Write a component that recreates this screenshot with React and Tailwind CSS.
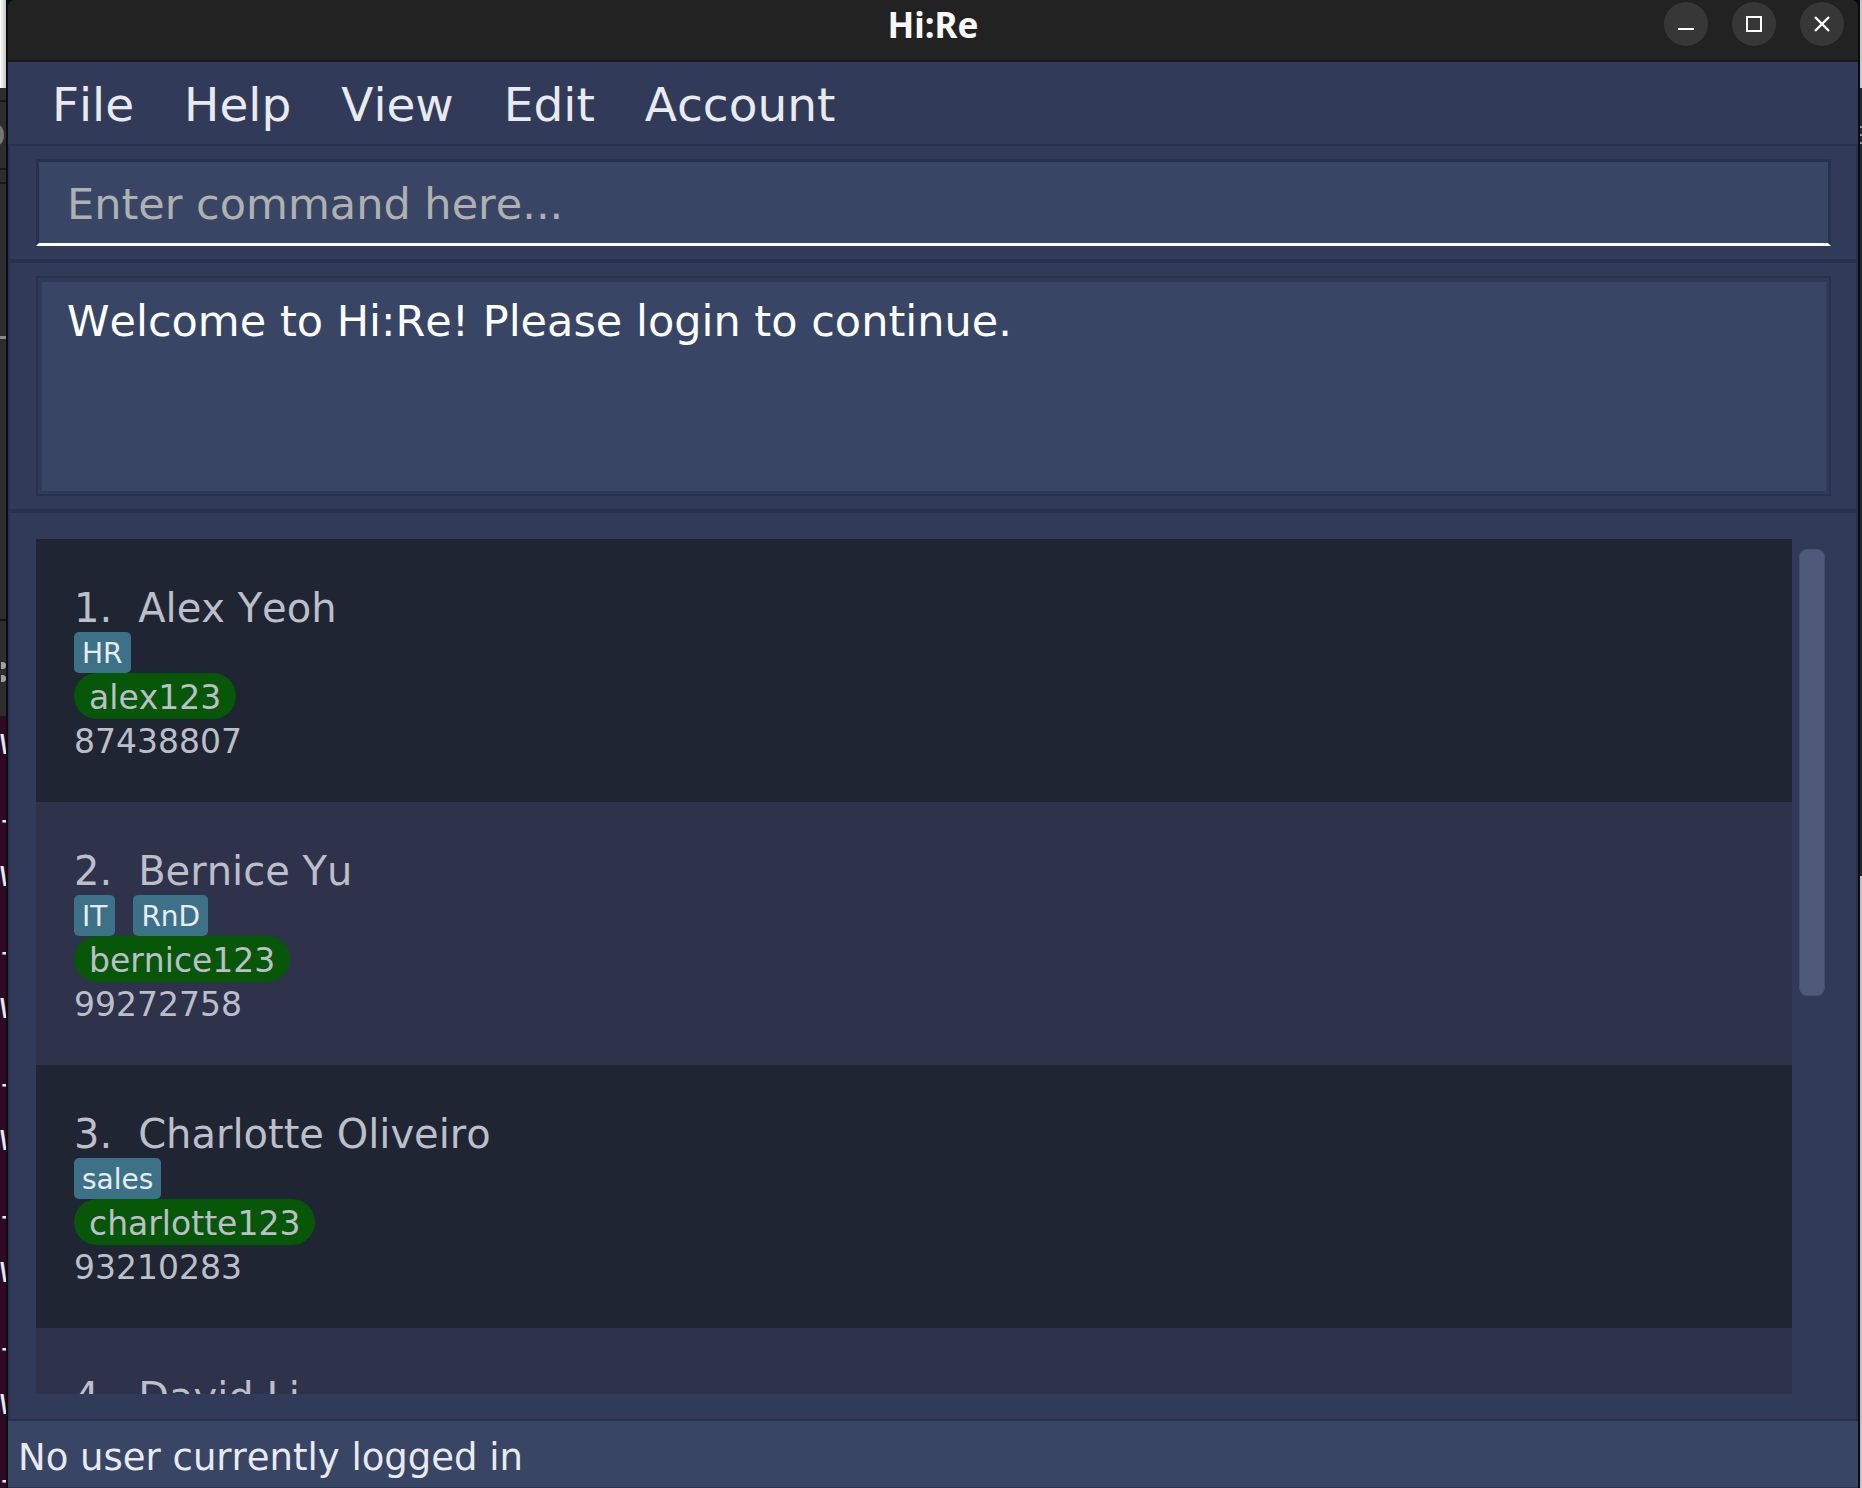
const MENUS = ["File", "Help", "View", "Edit", "Account"];

const PEOPLE = [
  { name: "Alex Yeoh", tags: ["HR"], user: "alex123", phone: "87438807" },
  { name: "Bernice Yu", tags: ["IT", "RnD"], user: "bernice123", phone: "99272758" },
  { name: "Charlotte Oliveiro", tags: ["sales"], user: "charlotte123", phone: "93210283" },
  { name: "David Li" },
];

const TERMINAL_LINES = ["w", "f", "w", "f", "w", "f", "w", "f", "w", "f", "w", "f"];

function WindowButton({ label, children }) {
  return (
    <button
      type="button"
      aria-label={label}
      className="flex h-11 w-11 items-center justify-center rounded-full bg-[#373737]"
    >
      <svg viewBox="0 0 16 16" className="h-4 w-4" fill="none" stroke="#ffffff" strokeWidth="2">
        {children}
      </svg>
    </button>
  );
}

function TitleBar() {
  return (
    <header className="grid h-[62px] shrink-0 grid-cols-[1fr_auto_1fr] border-b-2 border-[#18181b] bg-[#222222] px-[14px]">
      <span />
      <h1 className="pt-[1px] font-['Noto_Sans'] text-[35px] leading-[48px] font-bold text-[#f8f8f8]">Hi:Re</h1>
      <div className="flex gap-6 justify-self-end pt-[2px]">
        <WindowButton label="Minimize">
          <path d="M0 13h16" />
        </WindowButton>
        <WindowButton label="Maximize">
          <path d="M1 1h14v14H1z" />
        </WindowButton>
        <WindowButton label="Close">
          <path d="M1 1l14 14M15 1L1 15" strokeWidth="2.4" />
        </WindowButton>
      </div>
    </header>
  );
}

function PersonRow({ index, person }) {
  return (
    <li className="h-[263px] shrink-0 pt-[46px] pl-[38px] text-[#bcbec8] odd:bg-[#202534] even:bg-[#2e324b]">
      <h2 className="flex gap-[26px] text-[40px] leading-[47px]">
        <span>{index}.</span>
        <span>{person.name}</span>
      </h2>
      {person.tags && (
        <>
          <div className="flex gap-[18px]">
            {person.tags.map((tag) => (
              <span
                key={tag}
                className="h-[41px] rounded-[5px] bg-[#3d7187] px-2 text-[28px] leading-[43px] text-[#e6edf0]"
              >
                {tag}
              </span>
            ))}
          </div>
          <p className="h-[46px] w-fit rounded-full bg-[#065808] px-[15px] text-[33px] leading-[50px]">
            {person.user}
          </p>
          <p className="text-[33px] leading-[45px]">{person.phone}</p>
        </>
      )}
    </li>
  );
}

export default function App() {
  return (
    <div className="flex h-screen overflow-hidden bg-[#0a0c10] font-['DejaVu_Sans',sans-serif] [font-kerning:none]">
      <div aria-hidden="true" className="flex w-[6px] shrink-0 flex-col overflow-hidden">
        <div className="h-[88px] shrink-0 bg-linear-to-r from-white to-[#c4c4c4]" />
        <div className="flex h-[628px] shrink-0 flex-col bg-[#2d2d2d]">
          <div className="mt-3 h-[2px] shrink-0 bg-[#181818]" />
          <div className="mt-[18px] flex h-[40px] shrink-0 justify-end text-[40px] leading-[24px] text-[#777777]">o</div>
          <div className="mt-[8px] h-[2px] shrink-0 bg-[#181818]" />
          <div className="mt-[12px] h-[2px] shrink-0 bg-[#181818]" />
          <div className="mt-[152px] h-[3px] shrink-0 bg-[#888888]" />
          <div className="mt-[280px] h-[2px] shrink-0 bg-[#111111]" />
          <div className="flex h-[94px] shrink-0 flex-col items-end justify-center gap-[6px] overflow-hidden pt-2">
            <span className="h-[7px] w-[5px] rounded-r-full bg-[#a0a0a0]" />
            <span className="h-[7px] w-[5px] rounded-r-full bg-[#a0a0a0]" />
          </div>
        </div>
        <div className="flex flex-1 flex-col overflow-hidden bg-[#300a24] text-[#e8e8e8]">
          {TERMINAL_LINES.map((c, i) => (
            <div
              key={i}
              className="h-[66px] shrink-0 font-['Liberation_Mono',monospace] text-[36px] leading-[50px] odd:pt-1 even:pt-6"
            >
              {c}
            </div>
          ))}
        </div>
      </div>

      <main className="ml-[2px] flex min-w-0 flex-1 flex-col overflow-hidden rounded-t-lg bg-[#313b59]">
        <TitleBar />
        <nav className="flex h-[82px] shrink-0 gap-[50px] pl-11 text-[47px] leading-[85px] text-[#e9eaee]">
          {MENUS.map((m) => (
            <button key={m} type="button">
              {m}
            </button>
          ))}
        </nav>

        <section className="shrink-0 border-2 border-[#28314e] py-[13px] pr-[25px] pl-[26px]">
          <input
            type="text"
            aria-label="Command"
            placeholder="Enter command here..."
            className="block h-[87px] w-full border-3 border-[#28314e] border-b-white bg-[#394565] px-[28px] pt-[2px] text-[43px] text-white placeholder-[#b0b0b0] outline-none"
          />
        </section>

        <section className="shrink-0 border-2 border-[#28314e] py-[13px] pr-[25px] pl-[26px]">
          <div className="h-[220px] border-2 border-[#28314e] bg-[#303a58] p-[3px] pt-1 pl-1">
            <p className="h-full bg-[#394565] px-[25px] pt-[13px] text-[43px] leading-[52px] text-white">
              Welcome to Hi:Re! Please login to continue.
            </p>
          </div>
        </section>

        <section className="flex min-h-0 flex-1 gap-[7px] border-2 border-[#28314e] pt-[26px] pr-[31px] pb-[25px] pl-[26px]">
          <ol className="flex min-w-0 flex-1 flex-col overflow-hidden">
            {PEOPLE.map((p, i) => (
              <PersonRow key={p.name} index={i + 1} person={p} />
            ))}
          </ol>
          <div className="w-[26px] shrink-0 py-[10px]">
            <div className="h-[447px] rounded-lg border border-[#465070] bg-[#4f5a7b]" />
          </div>
        </section>

        <footer className="h-[67px] shrink-0 border-b border-[#28314e] bg-[#394565] pl-[10px] text-[37px] leading-[74px] text-[#e9eaee]">
          No user currently logged in
        </footer>
      </main>

      <div aria-hidden="true" className="ml-[2px] flex w-[2px] shrink-0 flex-col">
        <div className="h-[88px] bg-[#c8c8c8]" />
        <div className="flex h-[788px] flex-col gap-[6px] bg-[#2b2a28] pt-[38px]">
          <span className="h-[2px] bg-[#999999]" />
          <span className="h-[2px] bg-[#999999]" />
          <span className="h-[2px] bg-[#999999]" />
        </div>
        <div className="flex-1 bg-[#c4c0bc]" />
      </div>
    </div>
  );
}
